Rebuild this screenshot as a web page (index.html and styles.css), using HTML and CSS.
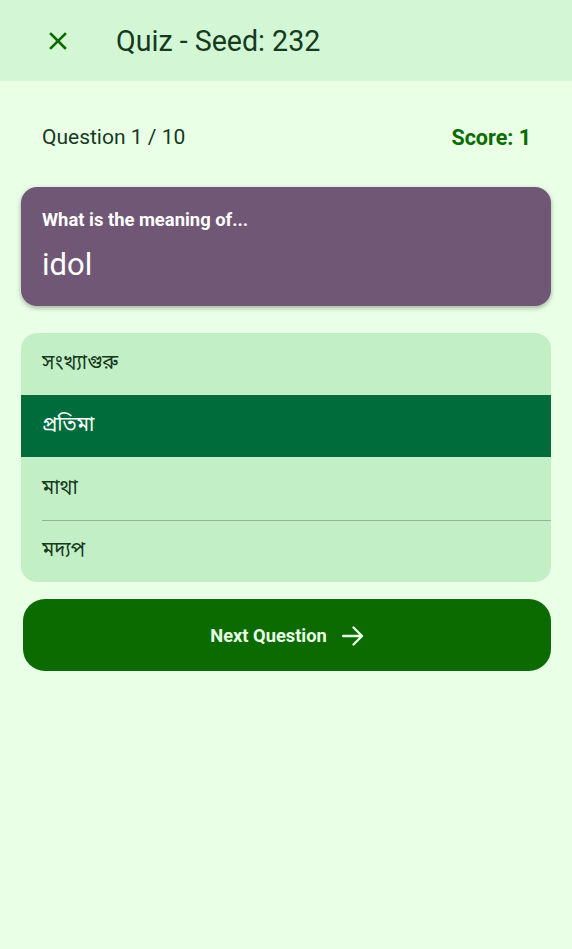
FILE: index.html
```html
<!DOCTYPE html>
<html>
<head>
<meta charset="utf-8">
<link rel="stylesheet" href="styles.css">
</head>
<body>
<header class="appbar">
  <span class="close">
    <svg width="18" height="18" viewBox="0 0 18 18"><path d="M2 2 L16 16 M16 2 L2 16" stroke="#0b6b00" stroke-width="2.6" stroke-linecap="square" fill="none"/></svg>
  </span>
  <h1 class="title">Quiz - Seed: 232</h1>
</header>
<main class="content">
  <div class="status">
    <span class="qnum">Question 1 / 10</span>
    <span class="score">Score: 1</span>
  </div>
  <section class="card">
    <div class="prompt">What is the meaning of...</div>
    <div class="word">idol</div>
  </section>
  <ul class="options">
    <li class="option">সংখ্যাগুরু</li>
    <li class="option selected">প্রতিমা</li>
    <li class="option">মাথা</li>
    <li class="option">মদ্যপ</li>
  </ul>
  <button class="next">
    <span>Next Question</span>
    <svg width="22" height="22" viewBox="0 0 22 22"><path d="M1.2 11 H20 M11.5 2.5 L20 11 L11.5 19.5" stroke="#e8ffe6" stroke-width="2.4" fill="none" stroke-linecap="round" stroke-linejoin="round"/></svg>
  </button>
</main>
</body>
</html>
```
FILE: styles.css
```css
* { box-sizing: border-box; }
html, body { margin: 0; padding: 0; }
body {
  background: #e9ffe6;
  font-family: Roboto, "Noto Sans Bengali", "Noto Sans", sans-serif;
  width: 572px;
  height: 949px;
}
.appbar {
  height: 81px;
  background: #d3f7d4;
  display: flex;
  align-items: center;
  padding-left: 49px;
}
.close { display: flex; width: 18px; height: 18px; margin-top: 1px; }
.title {
  margin: 0 0 0 49px;
  font-size: 28.6px;
  font-weight: 400;
  color: #163a1e;
}
.content { padding: 0 21px; }
.status {
  display: flex;
  justify-content: space-between;
  align-items: center;
  height: 106px;
  padding: 6px 21px 0 21px;
  font-size: 21px;
}
.qnum { color: #163a1e; }
.score { color: #0b6b00; font-weight: 700; font-size: 21.5px; margin-right: -1px; }
.card {
  background: #705776;
  border-radius: 16px;
  height: 119px;
  padding: 21px 21px 0;
  box-shadow: 0 2px 5px rgba(0,0,0,0.3);
  color: #fff;
}
.prompt { font-size: 18.4px; font-weight: 700; line-height: 24px; }
.word { font-size: 31px; line-height: 40px; margin-top: 13px; }
.options {
  list-style: none;
  margin: 27px 0 0;
  padding: 0;
  background: #c2efc5;
  border-radius: 16px;
  overflow: hidden;
}
.option {
  height: 61.5px;
  display: flex;
  align-items: center;
  padding-left: 21px;
  font-size: 20px;
  color: #163a1e;
  position: relative;
}
.option + .option {
  height: 62.5px;
}
.option + .option::before {
  content: "";
  position: absolute;
  top: 0; left: 21px; right: 0;
  height: 1px;
  background: #8fb793;
}
.option.selected {
  background: #006c3c;
  color: #fff;
}
.option.selected::before, .option.selected + .option::before { display: none; }
.next {
  display: flex;
  align-items: center;
  justify-content: center;
  gap: 15px;
  width: 528px;
  height: 72px;
  margin: 17px 0 0 2px;
  border: none;
  border-radius: 22px;
  background: #0b6b00;
  color: #e8ffe6;
  font-family: Roboto, sans-serif;
  font-size: 18.3px;
  font-weight: 700;
  padding: 0;
}
.next svg { margin-top: 2px; }
```
